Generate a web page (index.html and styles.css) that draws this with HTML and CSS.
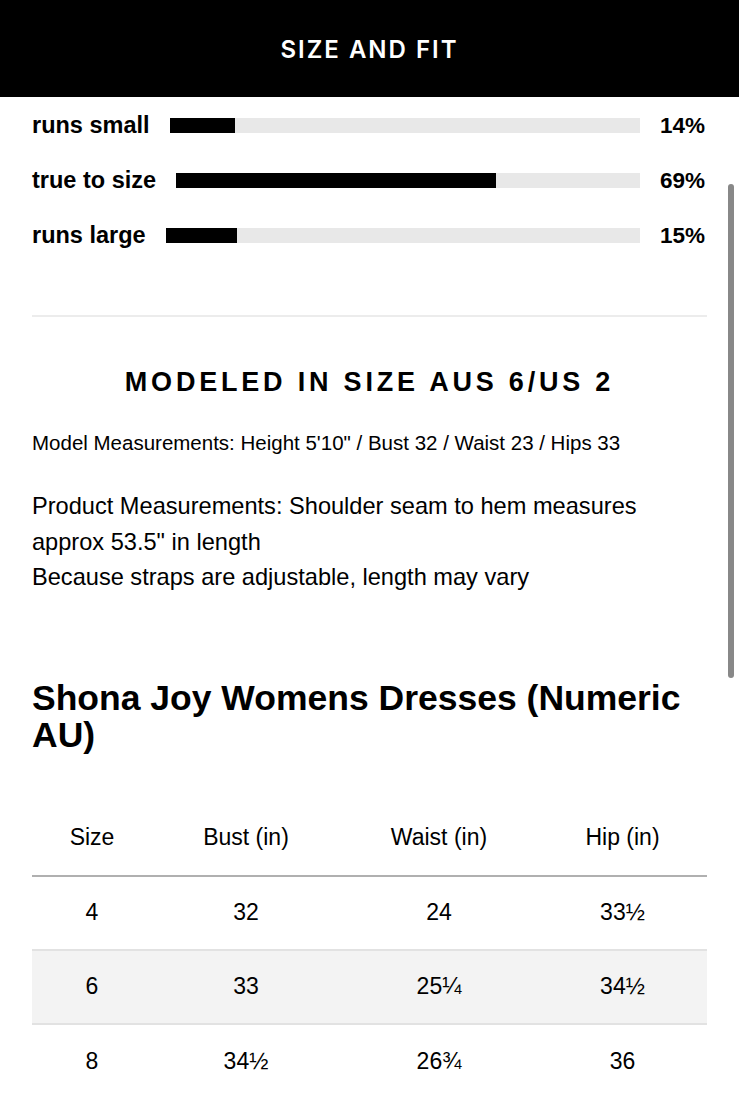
FILE: index.html
```html
<!DOCTYPE html>
<html lang="en">
<head>
<meta charset="utf-8">
<title>Size and Fit</title>
<link rel="stylesheet" href="styles.css">
</head>
<body>
<header class="topbar">
  <h1 class="topbar-title">SIZE AND FIT</h1>
</header>
<main class="content">
  <section class="fit">
    <div class="fit-row">
      <span class="fit-label">runs small</span>
      <div class="track"><div class="fill" style="width:14%"></div></div>
      <span class="fit-pct">14%</span>
    </div>
    <div class="fit-row">
      <span class="fit-label">true to size</span>
      <div class="track"><div class="fill" style="width:69%"></div></div>
      <span class="fit-pct">69%</span>
    </div>
    <div class="fit-row">
      <span class="fit-label">runs large</span>
      <div class="track"><div class="fill" style="width:15%"></div></div>
      <span class="fit-pct">15%</span>
    </div>
  </section>
  <hr class="divider">
  <h2 class="modeled">MODELED IN SIZE AUS 6/US 2</h2>
  <p class="model-meas">Model Measurements: Height 5'10" / Bust 32 / Waist 23 / Hips 33</p>
  <p class="product-meas">Product Measurements: Shoulder seam to hem measures approx 53.5" in length<br>Because straps are adjustable, length may vary</p>
  <h2 class="chart-title">Shona Joy Womens Dresses (Numeric AU)</h2>
  <table class="chart">
    <colgroup>
      <col class="c1"><col class="c2"><col class="c3"><col class="c4">
    </colgroup>
    <thead>
      <tr><th>Size</th><th>Bust (in)</th><th>Waist (in)</th><th>Hip (in)</th></tr>
    </thead>
    <tbody>
      <tr><td>4</td><td>32</td><td>24</td><td>33½</td></tr>
      <tr class="alt"><td>6</td><td>33</td><td>25¼</td><td>34½</td></tr>
      <tr><td>8</td><td>34½</td><td>26¾</td><td>36</td></tr>
    </tbody>
  </table>
</main>
<div class="scrollbar"></div>
</body>
</html>
```

FILE: styles.css
```css
* { box-sizing: border-box; }
html, body { margin: 0; padding: 0; background: #fff; }
body {
  font-family: "Liberation Sans", Arial, sans-serif;
  color: #000;
  overflow: hidden;
}
.topbar {
  height: 97px;
  background: #000;
  display: flex;
  align-items: center;
  justify-content: center;
}
.topbar-title {
  margin: 0;
  color: #fff;
  font-family: Inter, "Liberation Sans", sans-serif;
  font-weight: 600;
  font-size: 24px;
  letter-spacing: 2px;
  line-height: 1;
  padding-top: 2px;
}
.content { padding: 0 32px; }
.fit { display: flex; flex-direction: column; }
.fit-row {
  height: 55px;
  display: flex;
  align-items: center;
  gap: 20px;
}
.fit-row:first-child { margin-top: 1px; }
.fit-label { font-weight: 700; font-size: 23.5px; white-space: nowrap; }
.track { flex: 1; height: 15px; background: #e8e8e8; }
.fill { height: 100%; background: #000; }
.fit-pct { font-weight: 700; font-size: 22.5px; margin-right: 2px; }
.divider {
  margin: 52px 0 0;
  border: 0;
  border-top: 2px solid #ececec;
}
.modeled {
  margin: 50px 0 0;
  text-align: center;
  font-size: 27px;
  font-weight: 700;
  letter-spacing: 3.8px;
  line-height: 30px;
}
.model-meas {
  margin: 34px 0 0;
  font-size: 20.5px;
  line-height: 24px;
}
.product-meas {
  margin: 34px 0 0;
  max-width: 660px;
  font-size: 23.6px;
  line-height: 35.5px;
}
.chart-title {
  margin: 84px 0 0;
  font-size: 35.5px;
  font-weight: 700;
  line-height: 37px;
}
.chart {
  margin-top: 46px;
  width: 100%;
  border-collapse: collapse;
  font-size: 23px;
}
.c1 { width: 120px; }
.c2 { width: 188px; }
.c3 { width: 198px; }
.c4 { width: 169px; }
.chart th {
  font-weight: 400;
  height: 76px;
  text-align: center;
  vertical-align: middle;
  border-bottom: 2px solid #b0b0b0;
}
.chart td {
  height: 74px;
  text-align: center;
  vertical-align: middle;
}
.chart tr.alt td {
  background: #f3f3f3;
  border-top: 2px solid #e2e2e2;
  border-bottom: 2px solid #e2e2e2;
}
.scrollbar {
  position: fixed;
  left: 728px;
  top: 184px;
  width: 6px;
  height: 494px;
  border-radius: 3px;
  background: #888;
}
```
